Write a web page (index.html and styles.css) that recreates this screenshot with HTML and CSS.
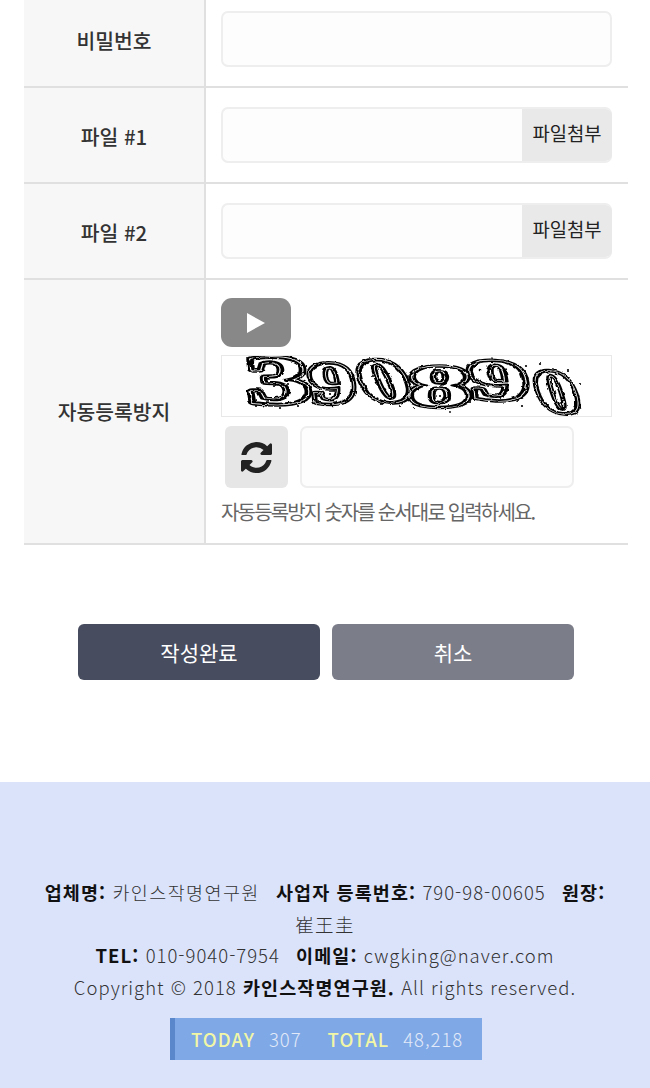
FILE: index.html
```html
<!DOCTYPE html>
<html lang="ko">
<head>
<meta charset="utf-8">
<title>글쓰기</title>
<link rel="stylesheet" href="styles.css">
</head>
<body>
<main class="form-table">
  <div class="row row-first">
    <div class="label">비밀번호</div>
    <div class="cell"><div class="input"></div></div>
  </div>
  <div class="row">
    <div class="label">파일 #1</div>
    <div class="cell"><div class="input file"><span class="file-btn">파일첨부</span></div></div>
  </div>
  <div class="row">
    <div class="label">파일 #2</div>
    <div class="cell"><div class="input file"><span class="file-btn">파일첨부</span></div></div>
  </div>
  <div class="row row-captcha">
    <div class="label">자동등록방지</div>
    <div class="cell captcha-cell">
      <button class="play" type="button" aria-label="음성 재생">
        <svg width="20" height="22" viewBox="0 0 20 22"><path d="M1 1 L19 11 L1 21 Z" fill="#fff"/></svg>
      </button>
      <div class="captcha-img">
        <svg width="389" height="60" viewBox="0 0 389 60">
          <defs>
            <filter id="soft" x="0" y="0" width="100%" height="100%">
              <feTurbulence type="fractalNoise" baseFrequency="0.18" numOctaves="2" seed="4" result="n"/>
              <feDisplacementMap in="SourceGraphic" in2="n" scale="3" xChannelSelector="R" yChannelSelector="G"/>
              <feGaussianBlur stdDeviation="0.5"/>
            </filter>
            <g id="digits" font-family="Liberation Serif, serif" font-size="68" font-weight="700">
              <text transform="matrix(1.85 0 0.1 1 27 47)">3</text>
              <text transform="matrix(1.35 0 0.12 0.87 90 47)">9</text>
              <text transform="matrix(1.45 -0.1 0.4 0.9 146 47)">0</text>
              <text transform="matrix(1.85 0 0 0.87 186 50)">8</text>
              <text transform="matrix(1.75 0.1 0.1 0.85 249 42)">9</text>
              <text transform="matrix(1.25 0.08 0.3 0.9 320 55)">0</text>
            </g>
          </defs>
          <g filter="url(#soft)" stroke-linejoin="round">
            <use href="#digits" fill="#fff" stroke="#000" stroke-width="6.4"/>
            <use href="#digits" fill="#fff" stroke="#fff" stroke-width="3.2"/>
            <use href="#digits" fill="none" stroke="#000" stroke-width="2"/>
            <g fill="#000">
              <circle cx="29" cy="7" r="3"/><circle cx="40" cy="36" r="1.1"/><circle cx="52" cy="30" r="1.1"/>
              <circle cx="66" cy="28" r="1.1"/><circle cx="34" cy="50" r="1.1"/><circle cx="58" cy="52" r="1.1"/>
              <circle cx="76" cy="50" r="1.1"/><circle cx="112" cy="14" r="1.3"/><circle cx="96" cy="40" r="1.1"/>
              <circle cx="108" cy="38" r="1.1"/><circle cx="132" cy="38" r="1.1"/><circle cx="150" cy="20" r="1.1"/>
              <circle cx="160" cy="48" r="1.1"/><circle cx="178" cy="50" r="1.1"/><circle cx="192" cy="52" r="1.1"/>
              <circle cx="218" cy="40" r="1.1"/><circle cx="248" cy="46" r="1.1"/><circle cx="258" cy="14" r="1.3"/>
              <circle cx="272" cy="20" r="1.1"/><circle cx="282" cy="34" r="1.1"/><circle cx="292" cy="8" r="1.1"/>
              <circle cx="304" cy="10" r="1.1"/><circle cx="318" cy="8" r="1.1"/><circle cx="296" cy="44" r="1.1"/>
              <circle cx="300" cy="50" r="1.1"/><circle cx="326" cy="28" r="1.1"/><circle cx="334" cy="42" r="1.1"/>
              <circle cx="326" cy="50" r="1.1"/><circle cx="340" cy="46" r="1.1"/><circle cx="358" cy="28" r="1.1"/>
              <circle cx="346" cy="14" r="1.1"/><circle cx="278" cy="42" r="1.1"/><circle cx="228" cy="56" r="0.9"/>
            </g>
          </g>
        </svg>
      </div>
      <div class="captcha-entry">
        <button class="refresh" type="button" aria-label="새로고침">
          <svg width="31" height="31" viewBox="128 128 1536 1536"><path fill="#222" d="M1639 1056q0 5-1 7-64 268-268 434.5t-478 166.5q-146 0-282.5-55t-243.5-157l-129 129q-19 19-45 19t-45-19-19-45v-448q0-26 19-45t45-19h448q26 0 45 19t19 45-19 45l-137 137q71 66 161 102t187 36q134 0 250-65t186-179q11-17 53-117 8-23 30-23h192q13 0 22.5 9.5t9.5 22.5zm25-800v448q0 26-19 45t-45 19h-448q-26 0-45-19t-19-45 19-45l138-138q-148-137-349-137-134 0-250 65t-186 179q-11 17-53 117-8 23-30 23h-199q-13 0-22.5-9.5t-9.5-22.5v-7q65-268 270-434.5t480-166.5q146 0 284 55.5t245 156.5l130-129q19-19 45-19t45 19 19 45z"/></svg>
        </button>
        <div class="input code"></div>
      </div>
      <p class="hint">자동등록방지 숫자를 순서대로 입력하세요.</p>
    </div>
  </div>
</main>
<div class="actions">
  <button class="btn btn-primary" type="button">작성완료</button>
  <button class="btn btn-cancel" type="button">취소</button>
</div>
<footer class="footer">
  <p class="info">
    <span class="item"><b>업체명:</b> <span class="ko">카인스작명연구원</span></span>
    <span class="item"><b>사업자 등록번호:</b> 790-98-00605</span>
    <span class="item"><b>원장:</b> <span class="ko">崔王圭</span></span><br>
    <span class="item"><b>TEL:</b> 010-9040-7954</span>
    <span class="item"><b>이메일:</b> cwgking@naver.com</span><br>
    Copyright © 2018 <b>카인스작명연구원.</b> All rights reserved.
  </p>
  <div class="counter">
    <span class="key">TODAY</span><span class="val">307</span>
    <span class="key key-total">TOTAL</span><span class="val">48,218</span>
  </div>
</footer>
</body>
</html>
```

FILE: styles.css
```css
* { box-sizing: border-box; }
html, body { margin: 0; padding: 0; }
body {
  width: 650px;
  height: 1088px;
  overflow: hidden;
  background: #fff;
  font-family: "Noto Sans CJK KR", "Noto Sans", sans-serif;
  color: #222;
}
.form-table { margin: 0 22px 0 24px; }
.row {
  display: grid;
  grid-template-columns: 182px 1fr;
  border-bottom: 2px solid #e0e0e0;
  height: 96px;
}
.row-first { height: 88px; }
.row-captcha { height: 265px; }
.label {
  display: flex;
  align-items: center;
  justify-content: center;
  background: #f7f7f7;
  border-right: 2px solid #e0e0e0;
  font-size: 20.4px;
  font-weight: 500;
  color: #333;
  padding-top: 2px;
}
.row-first .label { padding: 0 0 6px; }
.row-captcha .label { padding: 0 0 1px; }
.cell { padding: 19px 16px 0 15px; }
.row-first .cell { padding-top: 11px; }
.input {
  height: 56px;
  background: #fdfdfd;
  border: 2px solid #eeeeee;
  border-radius: 7px;
}
.file {
  display: flex;
  justify-content: flex-end;
  overflow: hidden;
  border-right: 0;
}
.file-btn {
  width: 90px;
  margin: -2px 0;
  display: flex;
  align-items: center;
  justify-content: center;
  background: #e9e9e9;
  font-size: 18.8px;
  color: #222;
  padding-bottom: 5px;
}
.row .captcha-cell { padding-top: 18px; }
.play {
  display: flex;
  align-items: center;
  justify-content: center;
  width: 70px;
  height: 49px;
  padding: 0;
  border: 0;
  border-radius: 11px;
  background: #888;
}
.captcha-img {
  height: 62px;
  margin-top: 8px;
  border: 1px solid #e8e8e8;
  background: #fff;
}
.captcha-img svg { display: block; }
.captcha-entry {
  display: flex;
  gap: 12px;
  margin: 9px 0 0 4px;
}
.refresh {
  display: flex;
  align-items: center;
  justify-content: center;
  width: 63px;
  height: 62px;
  padding: 0;
  border: 0;
  border-radius: 6px;
  background: #e6e6e6;
}
.code { width: 274px; height: 62px; }
.hint {
  margin: 8px 0 0;
  font-size: 20px;
  line-height: 32px;
  letter-spacing: -1.83px;
  color: #666;
}
.actions {
  display: flex;
  justify-content: center;
  gap: 12px;
  margin-top: 79px;
  padding-left: 2px;
}
.btn {
  width: 242px;
  height: 56px;
  border: 0;
  border-radius: 6px;
  color: #fff;
  font-family: inherit;
  font-size: 21px;
  font-weight: 400;
  padding: 0;
}
.btn-primary { background: #474c5f; }
.btn-cancel { background: #7b7d89; }
.footer {
  margin-top: 102px;
  height: 306px;
  padding-top: 95px;
  background: #dbe3fb;
  text-align: center;
}
.info {
  margin: 0 auto;
  width: 580px;
  font-size: 18.5px;
  line-height: 31.6px;
  letter-spacing: 1px;
  font-weight: 300;
  color: #333;
}
.info b { font-weight: 700; color: #111; letter-spacing: 1.1px; }
.info .ko { letter-spacing: 1.4px; }
.item + .item { margin-left: 10px; }
.counter {
  display: flex;
  align-items: center;
  width: 312px;
  height: 42px;
  margin: 15px 0 0 170px;
  padding-left: 16px;
  background: #7ea8e6;
  border-left: 5px solid #5a86cc;
  font-size: 18.5px;
  letter-spacing: 1px;
  white-space: nowrap;
}
.key { color: #f1f6a6; font-weight: 500; margin-right: 14px; }
.key-total { margin-left: 26px; }
.val { color: #e2e9f8; font-weight: 300; }
```
